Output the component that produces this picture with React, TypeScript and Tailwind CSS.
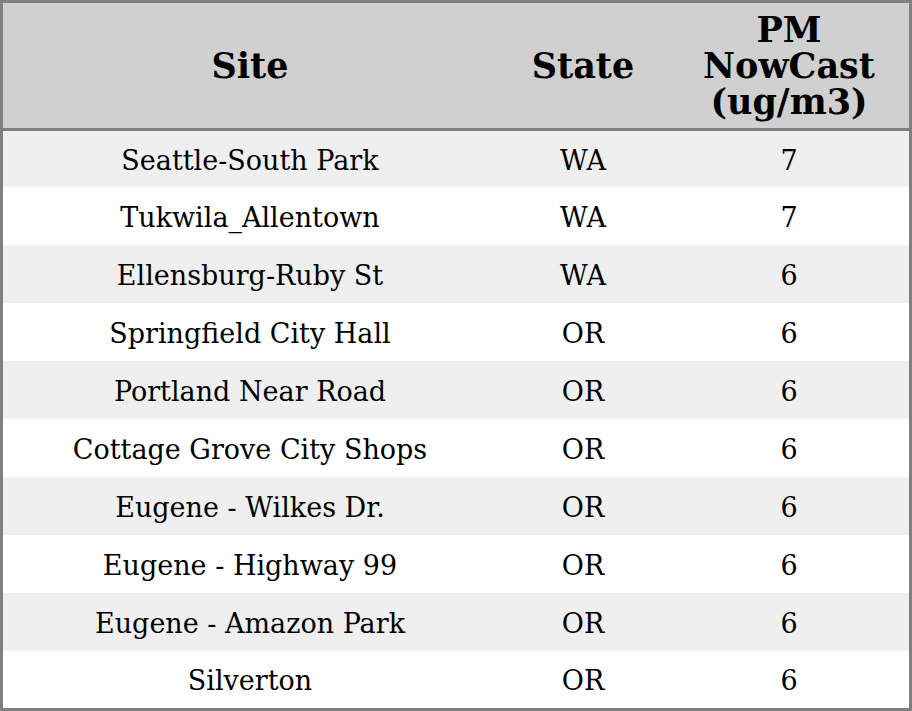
import React from "react";

const rows: [string, string, string][] = [
  ["Seattle-South Park", "WA", "7"],
  ["Tukwila_Allentown", "WA", "7"],
  ["Ellensburg-Ruby St", "WA", "6"],
  ["Springfield City Hall", "OR", "6"],
  ["Portland Near Road", "OR", "6"],
  ["Cottage Grove City Shops", "OR", "6"],
  ["Eugene - Wilkes Dr.", "OR", "6"],
  ["Eugene - Highway 99", "OR", "6"],
  ["Eugene - Amazon Park", "OR", "6"],
  ["Silverton", "OR", "6"],
];

const heights = ["h-[56px]", "h-[58px]", "h-[58px]", "h-[58px]", "h-[58px]", "h-[58px]", "h-[58px]", "h-[58px]", "h-[58px]", "h-[57px]"];

export default function App() {
  return (
    <div
      className="w-[912px] h-[711px] border-[3px] border-[#808080] bg-white text-black flex flex-col"
      style={{ fontFamily: '"DejaVu Serif", serif' }}
    >
      <div className="h-[125px] bg-[#d0d0d0] grid grid-cols-[494px_172px_240px] items-center text-center font-bold text-[35px] leading-[36px] border-b-[3px] border-[#808080] box-content">
        <div>Site</div>
        <div>State</div>
        <div>
          PM
          <br />
          NowCast
          <br />
          (ug/m3)
        </div>
      </div>
      {rows.map((r, i) => (
        <div
          key={i}
          className={`${heights[i]} grid grid-cols-[494px_172px_240px] items-center text-center text-[27px] leading-[32px] pt-[3px] ${i % 2 === 0 ? "bg-[#efefef]" : "bg-white"}`}
        >
          <div>{r[0]}</div>
          <div>{r[1]}</div>
          <div>{r[2]}</div>
        </div>
      ))}
    </div>
  );
}
